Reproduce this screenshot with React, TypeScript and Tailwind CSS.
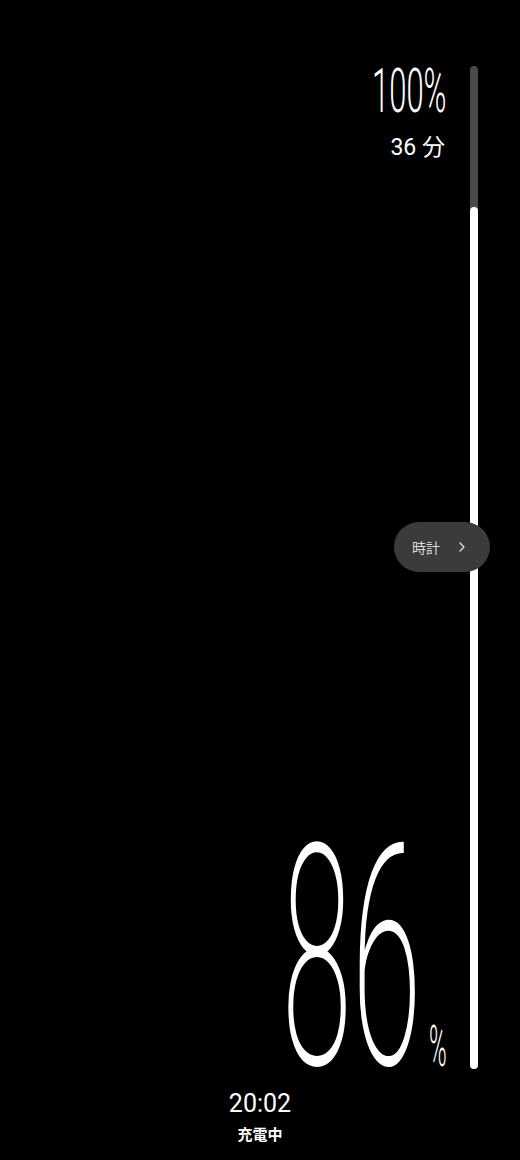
import React from 'react';
import { ChevronRight } from 'lucide-react';

const roboto = { fontFamily: 'Roboto, "Noto Sans", sans-serif' };

export default function App() {
  return (
    <div className="relative w-full h-[1160px] bg-black overflow-hidden text-white antialiased" style={roboto}>
      {/* main area: texts + charge bar */}
      <div className="h-[1069px] pt-[66px] pr-[42px] flex justify-end gap-[23px]">
        <div className="flex flex-col items-end justify-between">
          <div className="flex flex-col items-end">
            {/* 100% — condensed by scaling */}
            <div className="mt-[2px] w-[75px] h-[44px] overflow-visible">
              <span className="block h-[54px] whitespace-nowrap origin-top-left scale-x-[0.5] text-[62px] font-light leading-none -mt-[8px]">
                100%
              </span>
            </div>
            <div
              className="mt-[24px] mr-[2px] text-[23px] leading-none"
              style={{ fontFamily: 'Roboto, "Noto Sans CJK JP", sans-serif' }}
            >
              36 分
            </div>
          </div>

          <div className="flex items-end gap-[5px]">
            <div className="w-[142px] h-[225px] overflow-visible">
              <span className="block h-[266px] whitespace-nowrap origin-top-left scale-x-[0.41] text-[309px] font-extralight leading-none -mt-[40px]">
                86
              </span>
            </div>
            <div className="w-[18px] h-[41px] mb-[3px] overflow-visible">
              <span className="block h-[48px] whitespace-nowrap origin-top-left scale-x-[0.42] text-[57px] font-light leading-none -mt-[7px]">
                %
              </span>
            </div>
          </div>
        </div>

        <div className="w-2 rounded-full bg-[#4a4a4a] flex flex-col">
          <div className="h-[141px] shrink-0" />
          <div className="flex-1 rounded-full bg-white" />
        </div>
      </div>

      {/* clock / status */}
      <div className="flex flex-col items-center pt-[22px]">
        <div className="text-[25px] leading-none">20:02</div>
        <div
          className="mt-[10px] text-[15px] font-bold leading-none"
          style={{ fontFamily: '"Noto Sans CJK JP", sans-serif' }}
        >
          充電中
        </div>
      </div>

      {/* clock pill over the bar */}
      <div className="absolute left-[394px] top-[522px] w-[96px] h-[50px] rounded-full bg-[#3b3b3b] flex items-center pl-[18px] gap-[14px] text-[#dddddd]">
        <span className="text-[14px] leading-none" style={{ fontFamily: '"Noto Sans CJK JP", sans-serif' }}>
          時計
        </span>
        <ChevronRight size={16} strokeWidth={2} />
      </div>
    </div>
  );
}
